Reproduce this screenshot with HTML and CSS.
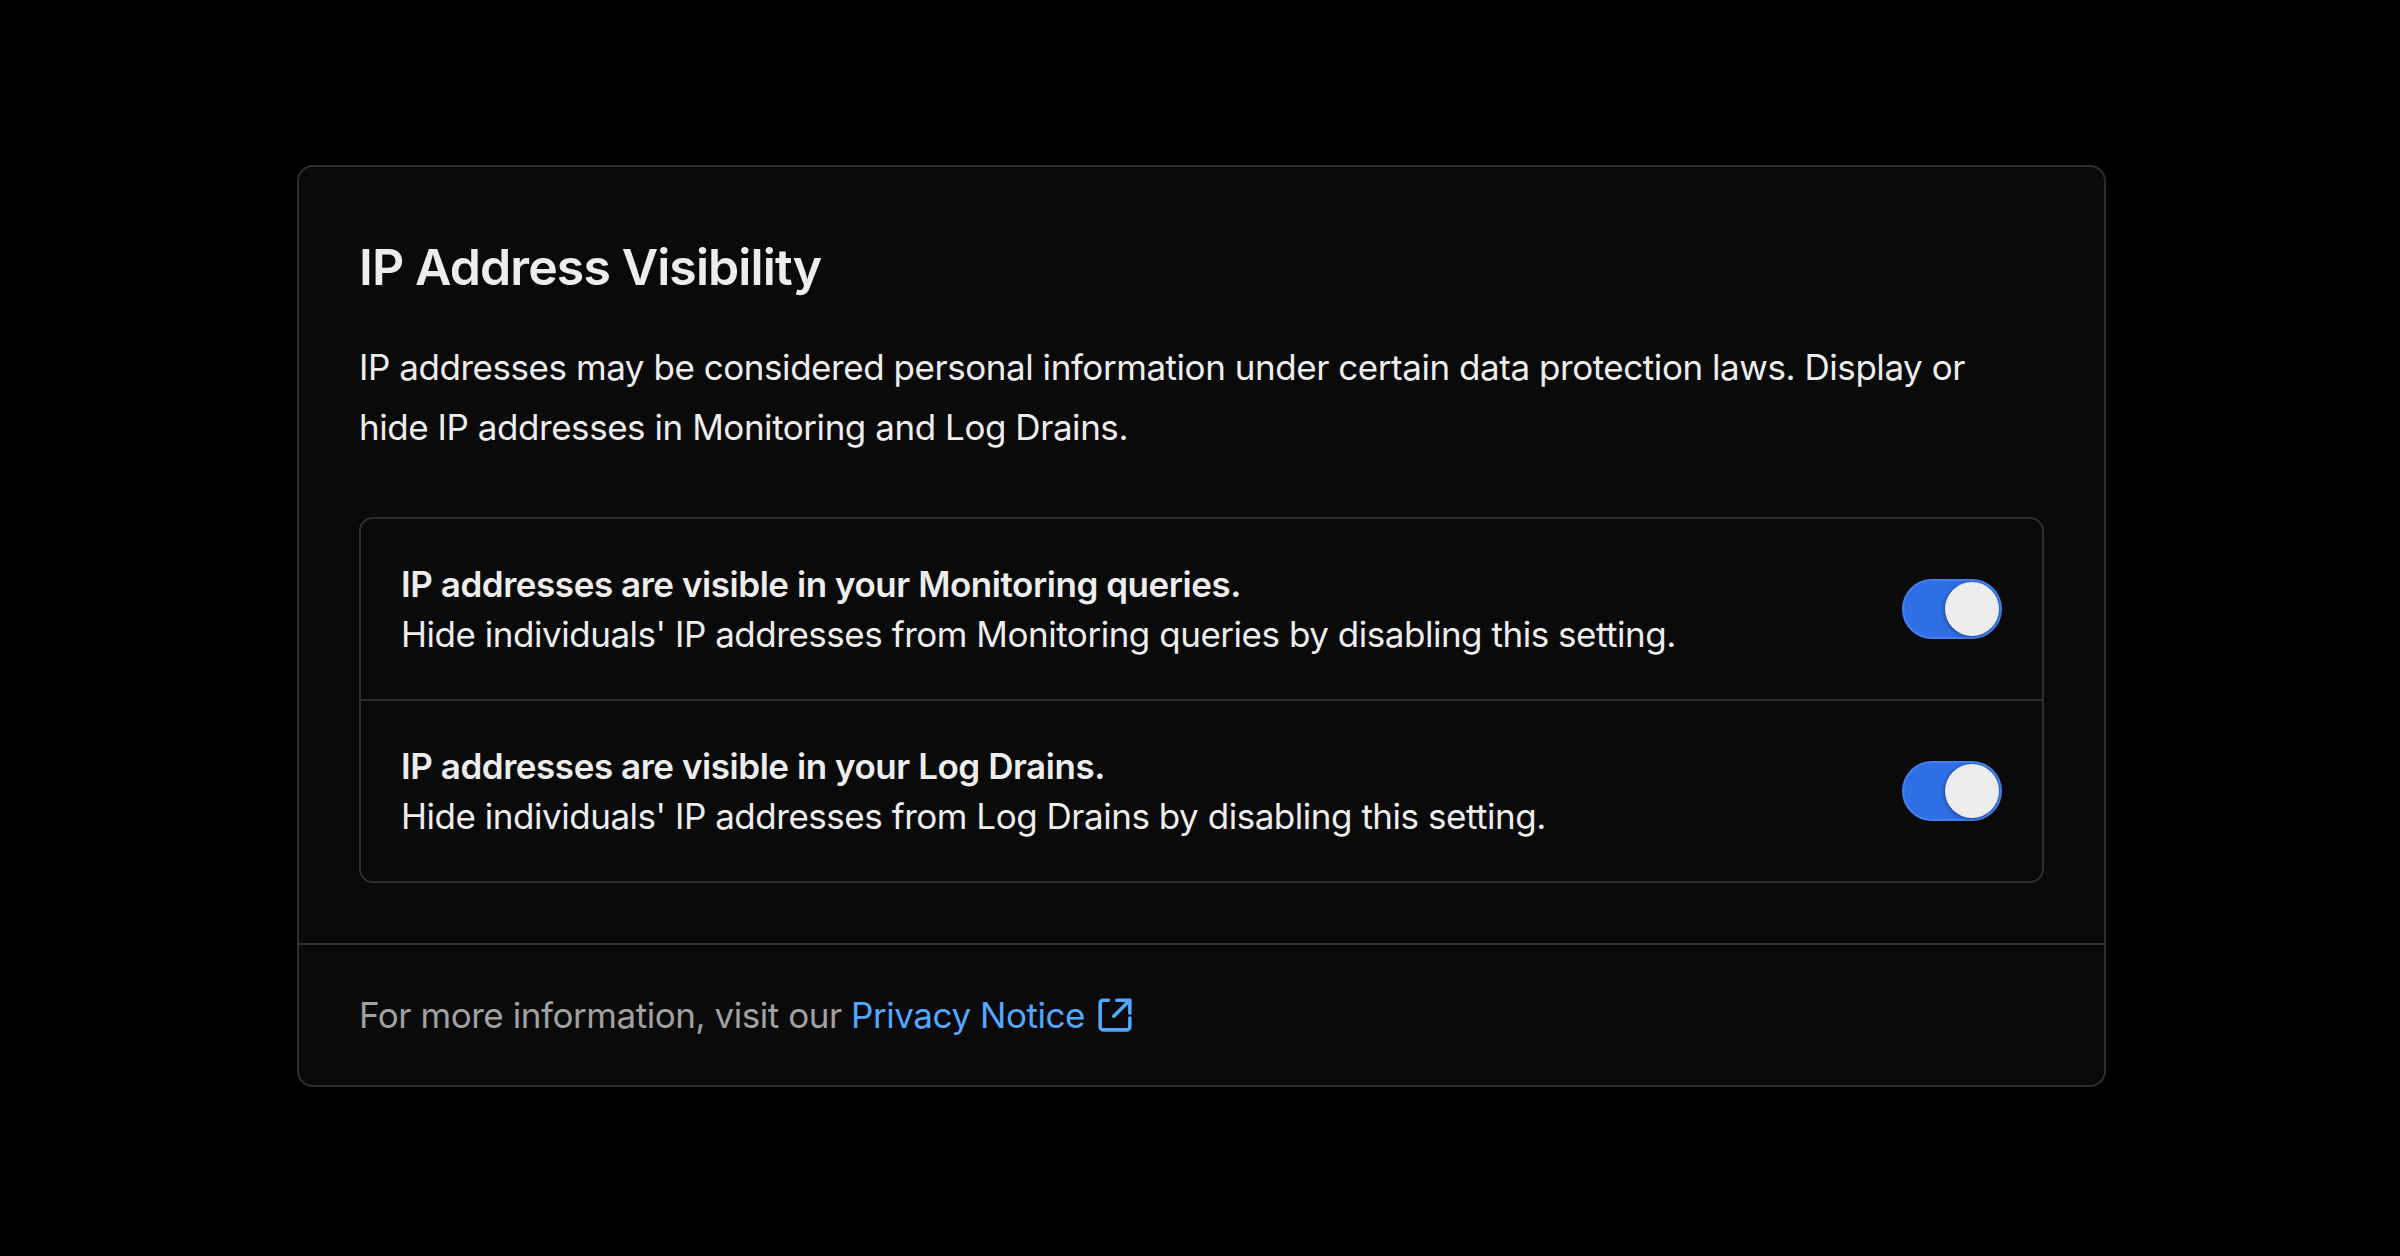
FILE: index.html
```html
<!DOCTYPE html>
<html lang="en">
<head>
    <meta charset="UTF-8">
    <meta name="viewport" content="width=device-width, initial-scale=1.0">
    <title>IP Address Visibility</title>
    <link rel="stylesheet" href="styles.css">
</head>
<body>
    <section class="card">
        <div class="card-body">
            <h2 class="card-title">IP Address Visibility</h2>
            <p class="card-text">IP addresses may be considered personal information under certain data protection laws. Display or hide IP addresses in Monitoring and Log Drains.</p>

            <div class="settings">
                <div class="setting">
                    <div class="setting-text">
                        <div class="setting-title">IP addresses are visible in your Monitoring queries.</div>
                        <div class="setting-desc">Hide individuals' IP addresses from Monitoring queries by disabling this setting.</div>
                    </div>
                    <button class="toggle on" aria-pressed="true"><span class="knob"></span></button>
                </div>
                <div class="setting">
                    <div class="setting-text">
                        <div class="setting-title">IP addresses are visible in your Log Drains.</div>
                        <div class="setting-desc">Hide individuals' IP addresses from Log Drains by disabling this setting.</div>
                    </div>
                    <button class="toggle on" aria-pressed="true"><span class="knob"></span></button>
                </div>
            </div>
        </div>

        <footer class="card-footer">
            For more information, visit our
            <a href="#" class="link">Privacy Notice
                <svg class="link-icon" viewBox="0 0 16 16" fill="none" stroke="currentColor" stroke-width="1.5" stroke-linecap="round" stroke-linejoin="round">
                    <!-- open box -->
                    <path d="M5.25 1.75H3a1.25 1.25 0 0 0-1.25 1.25v10a1.25 1.25 0 0 0 1.25 1.25h10a1.25 1.25 0 0 0 1.25-1.25V9.25"/>
                    <!-- arrow out of the corner -->
                    <path d="M7.5 8.5L14.25 1.75M8.75 1.75h5.5v5.5"/>
                </svg>
            </a>
        </footer>
    </section>
</body>
</html>
```

FILE: styles.css
```css
* {
    box-sizing: border-box;
}
body {
    margin: 0;
    background-color: #000;
    color: #ededed;
    font-family: Inter, "Noto Sans", sans-serif;
}
.card {
    width: 1809px;
    margin: 165px 0 0 297px;
    background-color: #0a0a0a;
    border: 2px solid #2e2e2e;
    border-radius: 16px;
    overflow: hidden;
}
.card-body {
    padding: 60px 60px 60px;
}
.card-title {
    margin: 0;
    font-size: 50px;
    line-height: 80px;
    font-weight: 600;
    letter-spacing: -0.9px;
}
.card-text {
    max-width: 1640px;
    margin: 30px 0 0;
    font-size: 35px;
    line-height: 60px;
    letter-spacing: -0.45px;
}
.settings {
    margin-top: 60px;
    border: 2px solid #2e2e2e;
    border-radius: 14px;
}
.setting {
    display: flex;
    align-items: center;
    justify-content: space-between;
    padding: 40px;
}
.setting + .setting {
    border-top: 2px solid #2e2e2e;
}
.setting-title {
    font-size: 35px;
    line-height: 50px;
    font-weight: 600;
    letter-spacing: -0.45px;
}
.setting-desc {
    font-size: 35px;
    line-height: 50px;
    letter-spacing: -0.47px;
}
.toggle {
    position: relative;
    width: 100px;
    height: 60px;
    padding: 0;
    border: 2px solid #4581ee;
    border-radius: 30px;
    background-color: #2f6fe6;
    cursor: pointer;
    flex-shrink: 0;
}
.knob {
    position: absolute;
    top: 1px;
    right: 1px;
    width: 54px;
    height: 54px;
    border-radius: 50%;
    background-color: #ededed;
    box-shadow: -1px 1px 4px rgba(0, 0, 0, 0.35);
}
.card-footer {
    border-top: 2px solid #2e2e2e;
    padding: 40px 60px;
    font-size: 35px;
    line-height: 60px;
    color: #a1a1a1;
    letter-spacing: -0.45px;
}
.link {
    color: #52a8ff;
    text-decoration: none;
}
.link-icon {
    width: 38px;
    height: 38px;
    margin-left: 2px;
    vertical-align: -6px;
}
```
